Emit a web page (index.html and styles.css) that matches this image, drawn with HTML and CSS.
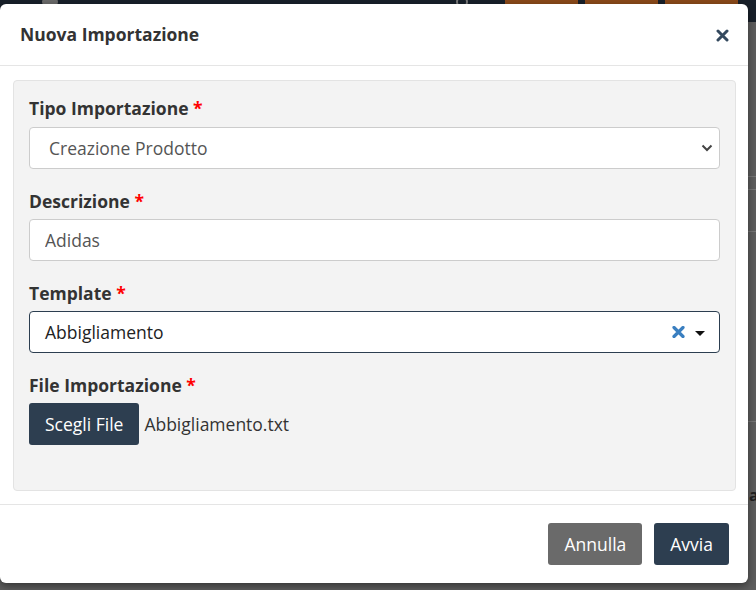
FILE: index.html
```html
<!DOCTYPE html>
<html lang="it">
<head>
    <meta charset="UTF-8">
    <meta name="viewport" content="width=device-width, initial-scale=1.0">
    <title>Nuova Importazione</title>
    <link rel="stylesheet" href="styles.css">
</head>
<body>
    <div class="page">
        <div class="topbar">
            <span class="avatar"></span>
            <span class="search"></span>
            <div class="top-actions">
                <span class="top-btn"></span>
                <span class="top-btn"></span>
                <span class="top-btn"></span>
            </div>
        </div>
        <div class="backdrop">
            <div class="bg-line" style="top: 154px"></div>
            <div class="bg-line" style="top: 167px"></div>
            <div class="bg-line" style="top: 209px"></div>
            <div class="bg-line" style="top: 399px"></div>
            <span class="bg-text">a</span>
        </div>
    </div>

    <div class="modal">
        <div class="modal-header">
            <h4 class="modal-title">Nuova Importazione</h4>
            <button class="close" type="button" aria-label="Chiudi">
                <svg width="13" height="13" viewBox="0 0 13 13"><path d="M2 2 L11 11 M11 2 L2 11" stroke="#34495e" stroke-width="3" stroke-linecap="round"/></svg>
            </button>
        </div>
        <div class="modal-body">
            <div class="well">
                <div class="form-group">
                    <label>Tipo Importazione <span class="req">*</span></label>
                    <select class="form-control">
                        <option>Creazione Prodotto</option>
                    </select>
                </div>
                <div class="form-group">
                    <label>Descrizione <span class="req">*</span></label>
                    <input class="form-control input" type="text" value="Adidas">
                </div>
                <div class="form-group">
                    <label>Template <span class="req">*</span></label>
                    <div class="select2">
                        <span class="select2-text">Abbigliamento</span>
                        <span class="select2-clear">
                            <svg width="13" height="12" viewBox="0 0 13 12"><path d="M2 1.5 L11 10.5 M11 1.5 L2 10.5" stroke="#3a7fc0" stroke-width="3.2" stroke-linecap="round"/></svg>
                        </span>
                        <span class="select2-caret"></span>
                    </div>
                </div>
                <div class="form-group">
                    <label>File Importazione <span class="req">*</span></label>
                    <div class="file-row">
                        <button class="btn btn-dark" type="button">Scegli File</button>
                        <span class="file-name">Abbigliamento.txt</span>
                    </div>
                </div>
            </div>
        </div>
        <div class="modal-footer">
            <button class="btn btn-grey" type="button">Annulla</button>
            <button class="btn btn-dark" type="button">Avvia</button>
        </div>
    </div>
</body>
</html>
```

FILE: styles.css
```css
body {
    font-family: "Open Sans", "Noto Sans", sans-serif;
    margin: 0;
    padding: 0;
    background-color: #5e5e5e;
    color: #333;
}
.page {
    height: 590px;
    overflow: hidden;
}
.topbar {
    height: 22px;
    background-color: #18202a;
    position: relative;
}
.avatar {
    position: absolute;
    left: 42px;
    top: -4px;
    width: 16px;
    height: 12px;
    border-radius: 50%;
    background-color: #6a6a6a;
}
.search {
    position: absolute;
    left: 456px;
    top: -4px;
    width: 8px;
    height: 8px;
    border: 2px solid #7a7a7a;
    border-radius: 50%;
}
.top-actions {
    display: flex;
    gap: 7px;
    margin-left: 505px;
}
.top-btn {
    width: 73px;
    height: 22px;
    background-color: #8a4a1a;
}
.backdrop {
    position: relative;
}
.bg-line {
    position: absolute;
    left: 748px;
    width: 8px;
    height: 1px;
    background-color: #777;
}
.bg-text {
    position: absolute;
    left: 749px;
    top: 462px;
    font-weight: bold;
    font-size: 16px;
    color: #222;
}
.modal {
    position: absolute;
    left: 0;
    top: 4px;
    width: 748px;
    background-color: #fff;
    border-radius: 6px;
    box-shadow: 0 3px 8px rgba(0, 0, 0, 0.45);
}
.modal-header {
    display: flex;
    align-items: center;
    justify-content: space-between;
    padding: 19px 19px 20px 20px;
    border-bottom: 1px solid #e5e5e5;
}
.modal-title {
    margin: 0;
    font-size: 17.5px;
    font-weight: 700;
    line-height: 22px;
    color: #333;
}
.close {
    display: flex;
    border: none;
    background: none;
    padding: 0;
    margin-top: 2px;
}
.modal-body {
    padding: 14px 12px 13px 13px;
}
.well {
    background-color: #f3f3f3;
    border: 1px solid #e3e3e3;
    border-radius: 4px;
    padding: 15px 15px 26px 15px;
}
.form-group {
    margin-bottom: 19px;
}
.form-group label {
    display: block;
    font-size: 17.5px;
    font-weight: 700;
    line-height: 24px;
    margin-bottom: 7px;
    color: #333;
}
.form-group + .form-group label {
    padding-top: 1px;
    margin-bottom: 6px;
}
.req {
    color: #f00;
}
.form-control {
    display: block;
    box-sizing: border-box;
    width: 100%;
    height: 42px;
    border: 1px solid #ccc;
    border-radius: 4px;
    background-color: #fff;
    font-family: "Open Sans", sans-serif;
    font-size: 17.5px;
    color: #555;
    margin: 0;
}
select.form-control {
    appearance: none;
    padding: 0 36px 0 19px;
    background-image: url("data:image/svg+xml;utf8,<svg xmlns='http://www.w3.org/2000/svg' width='12' height='8' viewBox='0 0 12 8'><path d='M1.5 1.5 L6 6 L10.5 1.5' fill='none' stroke='%23444' stroke-width='2'/></svg>");
    background-repeat: no-repeat;
    background-position: right 6px center;
}
.input {
    padding: 0 15px;
}
.select2 {
    display: flex;
    align-items: center;
    box-sizing: border-box;
    height: 42px;
    border: 1px solid #2c3e50;
    border-radius: 4px;
    background-color: #fff;
    padding: 0 14px 0 15px;
}
.select2-text {
    flex: 1;
    font-size: 17.5px;
    color: #222;
}
.select2-clear {
    display: flex;
    margin-right: 10px;
}
.select2-caret {
    width: 0;
    height: 0;
    border-left: 5px solid transparent;
    border-right: 5px solid transparent;
    border-top: 5px solid #111;
    margin-top: 2px;
}
.file-row {
    display: flex;
    align-items: center;
    gap: 5px;
}
.file-name {
    font-size: 17.5px;
    color: #333;
    margin-top: -1px;
}
.btn {
    height: 42px;
    padding: 0 16px;
    border: none;
    border-radius: 3px;
    font-family: "Open Sans", sans-serif;
    font-size: 17.5px;
    color: #fff;
}
.btn-dark {
    background-color: #2d3e50;
}
.btn-grey {
    background-color: #6a6a6a;
}
.modal-footer {
    display: flex;
    justify-content: flex-end;
    gap: 12px;
    padding: 18px 19px 18px 20px;
    border-top: 1px solid #e5e5e5;
}
```
